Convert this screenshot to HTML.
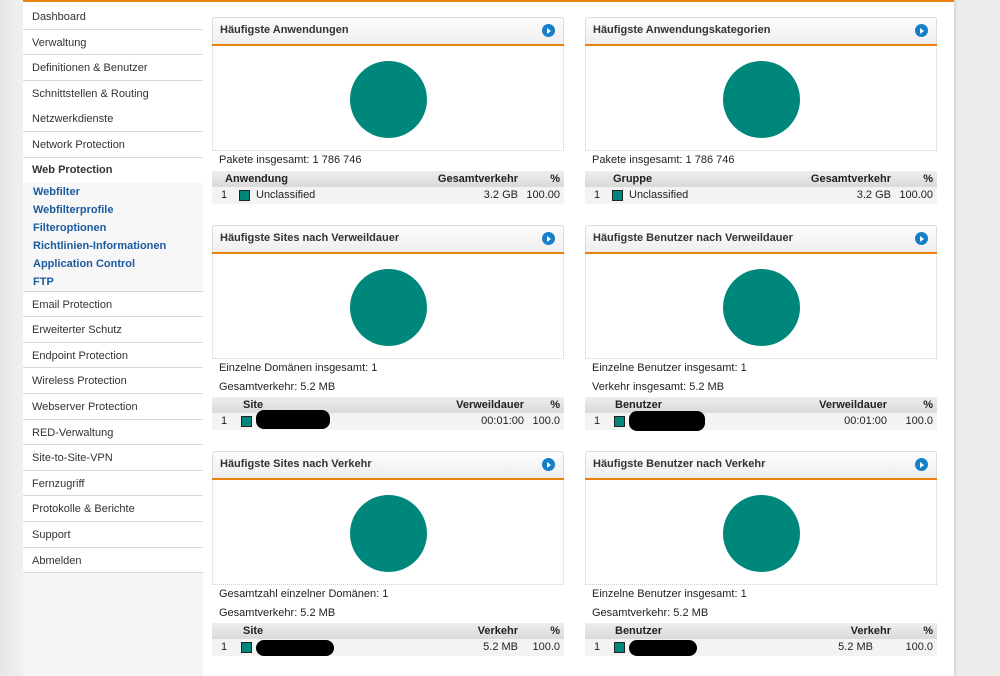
<!DOCTYPE html>
<html><head><meta charset="utf-8"><style>
*{margin:0;padding:0;box-sizing:border-box}
body{width:1000px;height:676px;overflow:hidden;position:relative;background:#ececec;font-family:"Liberation Sans",Arial,sans-serif;font-size:11px;color:#222}
.lg{position:absolute;left:0;top:0;width:23px;height:676px;background:linear-gradient(90deg,#e6e6e6,#f0f0f0)}
.side{position:absolute;left:23px;top:0;width:180px;height:676px;background:#f4f4f4}
.menu{position:absolute;left:23px;top:2px;width:180px;background:#fff;padding-top:2px}
.mi{height:25.6px;line-height:26px;padding-left:9px;border-bottom:1px solid #d8d8d8;color:#333;font-size:11px}
.mi.nb{border-bottom:none}
.sub{background:#f7f7f7;border-bottom:1px solid #d8d8d8;padding-bottom:0}
.sub .h{height:25px;line-height:25px;padding-left:9px;font-weight:bold;color:#333;background:#fff}
.sub .s{height:18px;line-height:18px;padding-left:10px;color:#1a5a9e;font-weight:bold;font-size:11px}
.main{position:absolute;left:203px;top:0;width:751px;height:676px;background:#fff}
.top{position:absolute;left:23px;top:0;width:931px;height:2px;background:#e8820c}
.rs{position:absolute;left:954px;top:0;width:4px;height:676px;background:linear-gradient(90deg,#d6d6d6,#ececec)}
.p{position:absolute;width:352px}
.ph{position:absolute;left:0;top:0;width:352px;height:27px;border:1px solid #dcdcdc;border-bottom:none;border-radius:3px 3px 0 0;background:linear-gradient(#fdfdfd,#eeeeee);font-weight:bold;color:#333;padding:6px 0 0 7px}
.ob{position:absolute;left:0;top:27px;width:352px;height:2px;background:#e8820c}
.ic{position:absolute;right:8px;top:6px;width:13px;height:13px;border-radius:50%;background:#1580c8}
.ic:after{content:"";position:absolute;left:5px;top:3.5px;border-left:4px solid #fff;border-top:3px solid transparent;border-bottom:3px solid transparent}
.ca{position:absolute;left:0;top:29px;width:352px;height:105px;border:1px dotted #cfcfcf;border-top:none}
.ci{position:absolute;left:137px;top:15px;width:77px;height:77px;border-radius:50%;background:#00877c}
.t{position:absolute;left:7px}
.th{position:absolute;left:0;width:352px;height:16px;background:linear-gradient(#eeeeee,#d9d9d9);font-weight:bold;color:#222}
.tr{position:absolute;left:0;width:352px;height:17px;background:#f3f3f3}
.th span,.tr span{position:absolute;top:2px}
.sq{position:absolute;top:3px;width:11px;height:11px;background:#00877c;border:1px solid #222}
.red{position:absolute;background:#000;border-radius:8px}
</style></head><body>
<div class="lg"></div><div class="side"></div>
<div class="main"></div><div class="rs"></div><div class="top"></div>
<div class="menu">
<div class="mi">Dashboard</div>
<div class="mi">Verwaltung</div>
<div class="mi">Definitionen &amp; Benutzer</div>
<div class="mi nb">Schnittstellen &amp; Routing</div>
<div class="mi">Netzwerkdienste</div>
<div class="mi">Network Protection</div>
<div class="sub"><div class="h">Web Protection</div>
<div class="s">Webfilter</div><div class="s">Webfilterprofile</div><div class="s">Filteroptionen</div><div class="s">Richtlinien-Informationen</div><div class="s">Application Control</div><div class="s">FTP</div></div>
<div class="mi">Email Protection</div>
<div class="mi">Erweiterter Schutz</div>
<div class="mi">Endpoint Protection</div>
<div class="mi">Wireless Protection</div>
<div class="mi">Webserver Protection</div>
<div class="mi">RED-Verwaltung</div>
<div class="mi">Site-to-Site-VPN</div>
<div class="mi">Fernzugriff</div>
<div class="mi">Protokolle &amp; Berichte</div>
<div class="mi">Support</div>
<div class="mi">Abmelden</div>
</div>

<div class="p" style="left:212px;top:17px">
<div class="ph">Häufigste Anwendungen<div class="ic"></div></div><div class="ob"></div>
<div class="ca"><div class="ci"></div></div>
<div class="t" style="top:137px">Pakete insgesamt: 1 786 746</div>
<div class="th" style="top:154px"><span style="left:13px">Anwendung</span><span style="right:46px">Gesamtverkehr</span><span style="right:4px">%</span></div>
<div class="tr" style="top:170px"><span style="left:9px">1</span><div class="sq" style="left:27px"></div><span style="left:44px">Unclassified</span><span style="right:46px">3.2 GB</span><span style="right:4px">100.00</span></div>
</div>
<div class="p" style="left:585px;top:17px">
<div class="ph">Häufigste Anwendungskategorien<div class="ic"></div></div><div class="ob"></div>
<div class="ca"><div class="ci"></div></div>
<div class="t" style="top:137px">Pakete insgesamt: 1 786 746</div>
<div class="th" style="top:154px"><span style="left:28px">Gruppe</span><span style="right:46px">Gesamtverkehr</span><span style="right:4px">%</span></div>
<div class="tr" style="top:170px"><span style="left:9px">1</span><div class="sq" style="left:27px"></div><span style="left:44px">Unclassified</span><span style="right:46px">3.2 GB</span><span style="right:4px">100.00</span></div>
</div>

<div class="p" style="left:212px;top:225px">
<div class="ph">Häufigste Sites nach Verweildauer<div class="ic"></div></div><div class="ob"></div>
<div class="ca"><div class="ci"></div></div>
<div class="t" style="top:137px">Einzelne Domänen insgesamt: 1</div>
<div class="t" style="top:156px">Gesamtverkehr: 5.2 MB</div>
<div class="th" style="top:172px"><span style="left:31px">Site</span><span style="right:40px">Verweildauer</span><span style="right:4px">%</span></div>
<div class="tr" style="top:188px"><span style="left:9px">1</span><div class="sq" style="left:29px"></div><div class="red" style="left:44px;top:-3px;width:74px;height:19px"></div><span style="right:40px">00:01:00</span><span style="right:4px">100.0</span></div>
</div>
<div class="p" style="left:585px;top:225px">
<div class="ph">Häufigste Benutzer nach Verweildauer<div class="ic"></div></div><div class="ob"></div>
<div class="ca"><div class="ci"></div></div>
<div class="t" style="top:137px">Einzelne Benutzer insgesamt: 1</div>
<div class="t" style="top:156px">Verkehr insgesamt: 5.2 MB</div>
<div class="th" style="top:172px"><span style="left:30px">Benutzer</span><span style="right:50px">Verweildauer</span><span style="right:4px">%</span></div>
<div class="tr" style="top:188px"><span style="left:9px">1</span><div class="sq" style="left:29px"></div><div class="red" style="left:44px;top:-2px;width:76px;height:20px"></div><span style="right:50px">00:01:00</span><span style="right:4px">100.0</span></div>
</div>

<div class="p" style="left:212px;top:451px">
<div class="ph">Häufigste Sites nach Verkehr<div class="ic"></div></div><div class="ob"></div>
<div class="ca"><div class="ci"></div></div>
<div class="t" style="top:137px">Gesamtzahl einzelner Domänen: 1</div>
<div class="t" style="top:156px">Gesamtverkehr: 5.2 MB</div>
<div class="th" style="top:172px"><span style="left:31px">Site</span><span style="right:46px">Verkehr</span><span style="right:4px">%</span></div>
<div class="tr" style="top:188px"><span style="left:9px">1</span><div class="sq" style="left:29px"></div><div class="red" style="left:44px;top:1px;width:78px;height:16px"></div><span style="right:46px">5.2 MB</span><span style="right:4px">100.0</span></div>
</div>
<div class="p" style="left:585px;top:451px">
<div class="ph">Häufigste Benutzer nach Verkehr<div class="ic"></div></div><div class="ob"></div>
<div class="ca"><div class="ci"></div></div>
<div class="t" style="top:137px">Einzelne Benutzer insgesamt: 1</div>
<div class="t" style="top:156px">Gesamtverkehr: 5.2 MB</div>
<div class="th" style="top:172px"><span style="left:30px">Benutzer</span><span style="right:46px">Verkehr</span><span style="right:4px">%</span></div>
<div class="tr" style="top:188px"><span style="left:9px">1</span><div class="sq" style="left:29px"></div><div class="red" style="left:44px;top:1px;width:68px;height:16px"></div><span style="right:64px">5.2 MB</span><span style="right:4px">100.0</span></div>
</div>
</body></html>
